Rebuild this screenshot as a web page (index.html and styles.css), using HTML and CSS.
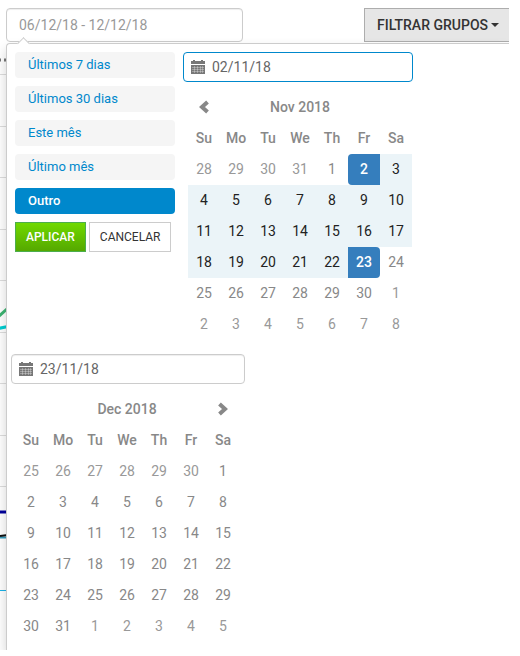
FILE: index.html
```html
<!DOCTYPE html>
<html lang="pt-BR">
<head>
<meta charset="utf-8">
<title>Filtro de período</title>
<link rel="stylesheet" href="styles.css">
</head>
<body>
<main class="page">
  <header class="toolbar">
    <input class="period" type="text" value="06/12/18 - 12/12/18" aria-label="Período">
    <button class="filter" type="button">FILTRAR GRUPOS<span class="caret"></span></button>
  </header>
  <div class="stage">
    <svg class="chart" width="12" height="607" viewBox="0 43 12 607" aria-hidden="true">
      <path d="M0 74.500H12M0 126.500H12M0 177.500H12M0 229.500H12M0 280.500H12M0 332.500H12M0 383.500H12M0 435.500H12M0 486.500H12" stroke="#ddd"/>
      <path d="M0 58.500v3M5 58.500v3" stroke="#777" stroke-width="2"/>
      <path d="M-2 317L8 308" stroke="#3cb371" stroke-width="3"/>
      <path d="M-2 328.500L8 326.500" stroke="#00ced1" stroke-width="3"/>
      <path d="M0 512H12" stroke="#00009c" stroke-width="3"/>
      <path d="M0 537.500H12" stroke="#3399bb" stroke-width="2"/>
      <path d="M0 536L8 535" stroke="#111" stroke-width="2"/>
      <path d="M0 590.500H12" stroke="#1ab2e8"/>
    </svg>
    <section class="picker" aria-label="Selecionar período">
      <div class="picker-top">
        <div class="ranges">
          <button class="range" type="button">Últimos 7 dias</button>
          <button class="range" type="button">Últimos 30 dias</button>
          <button class="range" type="button">Este mês</button>
          <button class="range" type="button">Último mês</button>
          <button class="range active" type="button">Outro</button>
          <div class="actions">
            <button class="apply" type="button">APLICAR</button>
            <button class="cancel" type="button">CANCELAR</button>
          </div>
        </div>
        <div class="calendar start">
          <label class="date focused">
            <svg class="icon" width="14" height="14" viewBox="0 0 14 14" aria-hidden="true"><path fill="#777" d="M0 1h2V0h2v1h6V0h2v1h2v3H0zM0 5h14v9H0z"/><path stroke="#fff" stroke-opacity=".6" d="M1 7.500h12M1 9.500h12M1 11.500h12M3.500 6v7M6.500 6v7M9.500 6v7M11.500 6v7" stroke-width=".5"/></svg>
            <input type="text" value="02/11/18" aria-label="Data inicial">
          </label>
          <table class="month">
            <colgroup><col span="7"></colgroup>
            <thead>
              <tr><th><button class="nav" type="button" aria-label="Mês anterior"><svg width="12" height="14" viewBox="0 0 12 14"><path d="M9.500 2L4 7l5.500 5" fill="none" stroke="#888" stroke-width="4"/></svg></button></th><th colspan="5">Nov 2018</th><th></th></tr>
              <tr><th>Su</th><th>Mo</th><th>Tu</th><th>We</th><th>Th</th><th>Fr</th><th>Sa</th></tr>
            </thead>
            <tbody>
              <tr><td class="off">28</td><td class="off">29</td><td class="off">30</td><td class="off">31</td><td>1</td><td class="edge first">2</td><td class="in">3</td></tr>
              <tr><td class="in">4</td><td class="in">5</td><td class="in">6</td><td class="in">7</td><td class="in">8</td><td class="in">9</td><td class="in">10</td></tr>
              <tr><td class="in">11</td><td class="in">12</td><td class="in">13</td><td class="in">14</td><td class="in">15</td><td class="in">16</td><td class="in">17</td></tr>
              <tr><td class="in">18</td><td class="in">19</td><td class="in">20</td><td class="in">21</td><td class="in">22</td><td class="edge last">23</td><td>24</td></tr>
              <tr><td>25</td><td>26</td><td>27</td><td>28</td><td>29</td><td>30</td><td class="off">1</td></tr>
              <tr><td class="off">2</td><td class="off">3</td><td class="off">4</td><td class="off">5</td><td class="off">6</td><td class="off">7</td><td class="off">8</td></tr>
            </tbody>
          </table>
        </div>
      </div>
      <div class="calendar end">
        <label class="date">
          <svg class="icon" width="14" height="14" viewBox="0 0 14 14" aria-hidden="true"><path fill="#777" d="M0 1h2V0h2v1h6V0h2v1h2v3H0zM0 5h14v9H0z"/><path stroke="#fff" stroke-opacity=".6" d="M1 7.500h12M1 9.500h12M1 11.500h12M3.500 6v7M6.500 6v7M9.500 6v7M11.500 6v7" stroke-width=".5"/></svg>
          <input type="text" value="23/11/18" aria-label="Data final">
        </label>
        <table class="month">
          <colgroup><col span="7"></colgroup>
          <thead>
            <tr><th></th><th colspan="5">Dec 2018</th><th><button class="nav" type="button" aria-label="Próximo mês"><svg width="12" height="14" viewBox="0 0 12 14"><path d="M2.500 2L8 7l-5.500 5" fill="none" stroke="#888" stroke-width="4"/></svg></button></th></tr>
            <tr><th>Su</th><th>Mo</th><th>Tu</th><th>We</th><th>Th</th><th>Fr</th><th>Sa</th></tr>
          </thead>
          <tbody>
            <tr><td class="off">25</td><td class="off">26</td><td class="off">27</td><td class="off">28</td><td class="off">29</td><td class="off">30</td><td>1</td></tr>
            <tr><td>2</td><td>3</td><td>4</td><td>5</td><td>6</td><td>7</td><td>8</td></tr>
            <tr><td>9</td><td>10</td><td>11</td><td>12</td><td>13</td><td>14</td><td>15</td></tr>
            <tr><td>16</td><td>17</td><td>18</td><td>19</td><td>20</td><td>21</td><td>22</td></tr>
            <tr><td>23</td><td>24</td><td>25</td><td>26</td><td>27</td><td>28</td><td>29</td></tr>
            <tr><td>30</td><td>31</td><td class="off">1</td><td class="off">2</td><td class="off">3</td><td class="off">4</td><td class="off">5</td></tr>
          </tbody>
        </table>
      </div>
    </section>
  </div>
</main>
</body>
</html>
```
FILE: styles.css
```css
* {
  box-sizing: border-box;
}

body {
  margin: 0;
  background: #fff;
  color: #777;
  font: 14px/20px Roboto, sans-serif;
}

button,
input {
  margin: 0;
  font: inherit;
  outline: 0;
}

.page {
  margin-right: 11px;
  overflow: hidden;
}

.toolbar {
  display: flex;
  justify-content: space-between;
  padding: 8px 0 1px 6px;
}

.period {
  width: 237px;
  height: 34px;
  padding: 0 12px;
  border: 1px solid #ccc;
  border-radius: 4px;
  background: #fff;
  color: #999;
  box-shadow: inset 0 1px 1px rgba(0, 0, 0, .07);
}

.filter {
  display: flex;
  align-items: center;
  gap: 3px;
  height: 34px;
  padding: 0 10px 0 12px;
  border: 1px solid #adadad;
  border-right: 0;
  background: #e6e6e6;
  color: #333;
  font-weight: 500;
}

.caret {
  border: 4px solid transparent;
  border-top-color: #333;
  border-bottom: 0;
}

.stage {
  position: relative;
}

.chart {
  position: absolute;
  top: 0;
  left: 0;
}

.picker {
  position: relative;
  margin-left: 6px;
  padding: 8px 4px;
  border: 1px solid #ccc;
  border-width: 1px 0 0 1px;
  border-radius: 4px 0 0 0;
  background: #fff;
  box-shadow: 0 6px 12px rgba(0, 0, 0, .18);
}

.picker::before {
  content: "";
  position: absolute;
  top: -5px;
  left: 12px;
  width: 8px;
  height: 8px;
  border: 1px solid #ccc;
  border-width: 1px 0 0 1px;
  background: #fff;
  transform: rotate(45deg);
}

.picker-top {
  display: flex;
  gap: 8px;
  padding-left: 4px;
}

.ranges {
  display: flex;
  flex-direction: column;
  gap: 8px;
  width: 160px;
}

.range {
  height: 26px;
  padding: 0 13px;
  border: 0;
  border-radius: 4px;
  background: #f5f5f5;
  color: #08c;
  font-size: 13px;
  text-align: left;
}

.range.active {
  background: #08c;
  color: #fff;
  font-weight: 500;
}

.actions {
  display: flex;
  gap: 3px;
}

.apply,
.cancel {
  height: 30px;
  padding: 0 10px;
  border: 1px solid #ccc;
  background: #fff;
  color: #333;
  font-size: 12px;
}

.apply {
  border-color: #4cae4c;
  background: linear-gradient(#70d900, #55a800);
  color: #fff;
  font-weight: 500;
}

.start {
  width: 230px;
}

.end {
  width: 234px;
  margin-top: 14px;
}

.date {
  display: flex;
  align-items: center;
  gap: 7px;
  height: 30px;
  padding: 0 7px;
  border: 1px solid #ccc;
  border-radius: 4px;
  box-shadow: inset 0 1px 1px rgba(0, 0, 0, .07);
}

.date.focused {
  border-color: #08c;
  box-shadow: none;
}

.date input {
  flex: 1;
  min-width: 0;
  padding: 0 0 1px;
  border: 0;
  background: none;
  color: #666;
}

.month {
  width: 224px;
  margin: 10px 0 0 4px;
  border-collapse: collapse;
  table-layout: fixed;
}

.start .month {
  margin-left: 5px;
}

.month col {
  width: 32px;
}

.month th,
.month td {
  height: 31px;
  padding: 0 0 1px;
  text-align: center;
}

.month th {
  color: #888;
  font-weight: 500;
}

.month td {
  color: #888;
}

.month .off {
  color: #999;
}

.month .in {
  background: #ebf4f8;
  color: #222;
}

.month .edge {
  background: #357ebd;
  color: #fff;
  font-weight: 500;
}

.month .first {
  border-radius: 4px 0 0 4px;
}

.month .last {
  border-radius: 0 4px 4px 0;
}

.nav {
  display: block;
  width: 100%;
  height: 20px;
  padding: 0;
  border: 0;
  background: none;
}

.nav svg {
  display: block;
  margin: auto;
}
```
